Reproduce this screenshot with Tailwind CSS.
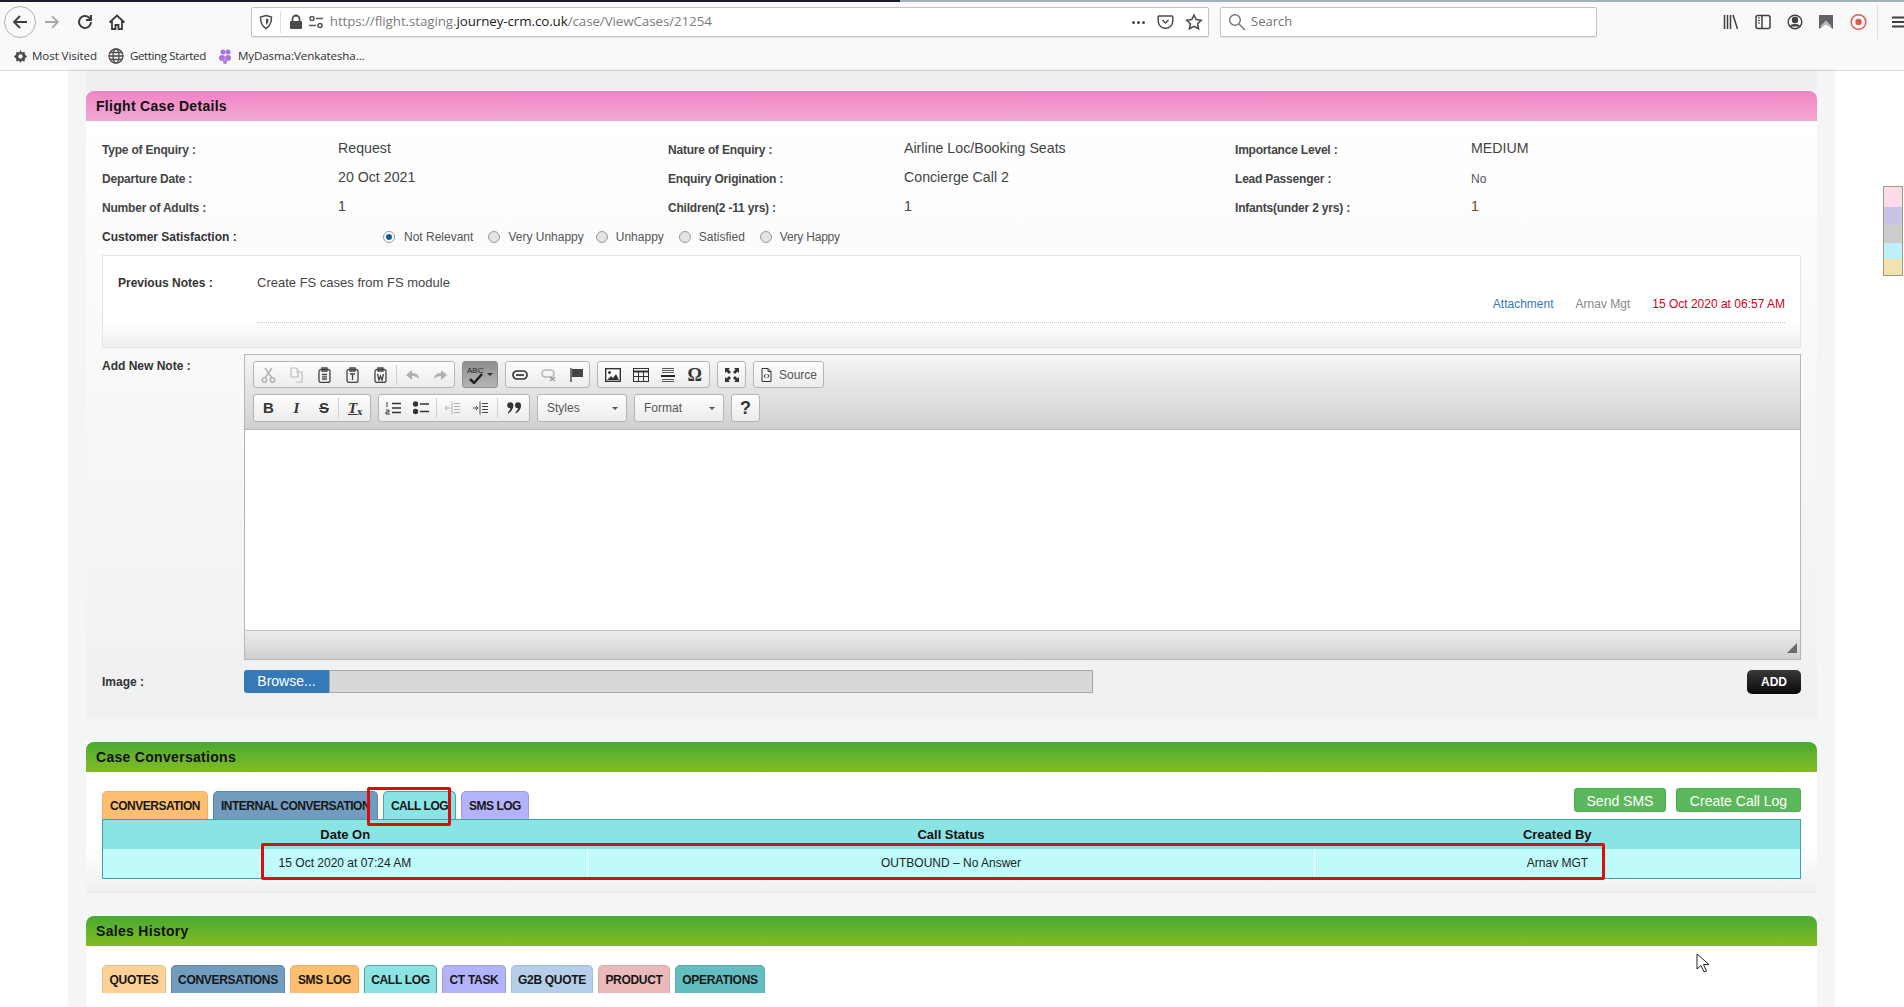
<!DOCTYPE html>
<html lang="en">
<head>
<meta charset="UTF-8">
<title>Flight Case Details</title>
<script src="https://cdn.jsdelivr.net/npm/@tailwindcss/browser@4"></script>
</head>
<body class="relative h-screen overflow-hidden bg-white font-['Liberation_Sans',Arial,sans-serif] text-[12px] text-[#333]">

<!-- browser chrome -->
<header class="h-[71px] bg-[#f9f9fa] border-b border-[#dcdcde] font-['Open_Sans',sans-serif] text-[#4a4a4f]">
  <div class="flex h-[2px]"><div class="w-[900px] bg-[#1b1b2f]"></div><div class="flex-1 bg-[#9fb4b8]"></div></div>
  <div class="flex items-center h-[40px]">
    <div class="ml-[4px] w-[32px] h-[32px] rounded-full border border-[#b1b1b3] flex items-center justify-center">
      <svg width="18" height="18" viewBox="0 0 18 18" fill="none" stroke="#3b3b3f" stroke-width="1.8"><path d="M16 9H3M9 3L3 9l6 6"/></svg>
    </div>
    <svg class="ml-[7px]" width="18" height="18" viewBox="0 0 18 18" fill="none" stroke="#a8a8ab" stroke-width="1.8"><path d="M2 9h13M9 3l6 6-6 6"/></svg>
    <svg class="ml-[15px]" width="18" height="18" viewBox="0 0 18 18" fill="none" stroke="#3b3b3f" stroke-width="2"><path d="M15 9a6 6 0 1 1-2-4.500L15 6.500M15 2v5h-5"/></svg>
    <svg class="ml-[14px]" width="18" height="18" viewBox="0 0 18 18" fill="none" stroke="#3b3b3f" stroke-width="1.800"><path d="M1.500 9.500L9 2.500l7.500 7M4 8v8h3.500v-4h3v4H14V8"/></svg>
    <div class="ml-[125px] w-[961px] h-[30px] bg-white border border-[#c4c4c6] rounded-[2px] flex items-center shadow-[0_1px_1px_rgba(0,0,0,0.1)]">
      <svg class="ml-[6px]" width="16" height="16" viewBox="0 0 16 16" fill="none" stroke="#4a4a4f" stroke-width="1.500"><path d="M8 1.500l5.500 1.500c0 5-1 9-5.500 11.500C3.500 12 2.500 8 2.500 3z"/><path d="M8 4.500l2.500.7c0 2.500-.5 4.300-2.500 5.500z" fill="#4a4a4f" stroke="none"/></svg>
      <div class="ml-[6px] w-px h-[22px] bg-[#dedee0]"></div>
      <svg class="ml-[8px]" width="14" height="16" viewBox="0 0 14 16" fill="#4a4a4f"><path d="M2 7h10a1 1 0 0 1 1 1v6a1 1 0 0 1-1 1H2a1 1 0 0 1-1-1V8a1 1 0 0 1 1-1z"/><path d="M3.500 7V5a3.500 3.500 0 0 1 7 0v2" fill="none" stroke="#4a4a4f" stroke-width="1.800"/></svg>
      <svg class="ml-[5px]" width="16" height="14" viewBox="0 0 16 14" fill="none" stroke="#55555a" stroke-width="1.500"><circle cx="4" cy="3.500" r="2"/><path d="M8 3.500h7M1 10.500h7"/><circle cx="12" cy="10.500" r="2"/></svg>
      <div class="ml-[6px] text-[13.4px] leading-none tracking-[-0.1px] text-[#7c7c80] whitespace-nowrap">https://flight.staging.<span class="text-[#1b1b20]">journey-crm.co.uk</span>/case/ViewCases/21254</div>
      <div class="ml-auto flex items-center">
        <div class="flex gap-[2px] mr-[12px]"><span class="w-[3px] h-[3px] rounded-full bg-[#4a4a4f]"></span><span class="w-[3px] h-[3px] rounded-full bg-[#4a4a4f]"></span><span class="w-[3px] h-[3px] rounded-full bg-[#4a4a4f]"></span></div>
        <svg class="mr-[11px]" width="17" height="16" viewBox="0 0 17 16" fill="none" stroke="#4a4a4f" stroke-width="1.500"><path d="M2 2h13a.8.8 0 0 1 .8.8V7a7.300 7.300 0 0 1-14.600 0V2.800A.8.8 0 0 1 2 2z"/><path d="M5.500 6l3 3 3-3"/></svg>
        <svg class="mr-[5px]" width="18" height="18" viewBox="0 0 18 18" fill="none" stroke="#4a4a4f" stroke-width="1.600"><path d="M9 2l2.200 4.500 5 .7-3.600 3.500.9 5L9 13.300l-4.500 2.400.9-5L1.800 7.200l5-.7z"/></svg>
      </div>
    </div>
    <div class="ml-[11px] w-[378px] h-[30px] bg-white border border-[#c4c4c6] rounded-[2px] flex items-center shadow-[0_1px_1px_rgba(0,0,0,0.1)]">
      <svg class="ml-[7px]" width="18" height="18" viewBox="0 0 18 18" fill="none" stroke="#77777b" stroke-width="1.500"><circle cx="7" cy="7" r="5.300"/><path d="M11 11l6 6"/></svg>
      <span class="ml-[5px] text-[13px] text-[#737373]">Search</span>
    </div>
    <div class="ml-[126px] flex items-center h-[34px]">
      <svg width="16" height="16" viewBox="0 0 16 16" fill="none" stroke="#3f3f44" stroke-width="1.500"><path d="M1.500 1v14M4.500 1v14M7.500 1v14M10 1l4.500 14"/></svg>
      <svg class="ml-[16px]" width="16" height="16" viewBox="0 0 16 16" fill="none" stroke="#3f3f44" stroke-width="1.500"><rect x="1" y="1.500" width="14" height="13" rx="2"/><path d="M7 1.500v13"/><path d="M3 4h2M3 6.500h2M3 9h2" stroke-width="1"/></svg>
      <svg class="ml-[16px]" width="16" height="16" viewBox="0 0 16 16" fill="none" stroke="#3f3f44" stroke-width="1.400"><circle cx="8" cy="8" r="6.800"/><circle cx="8" cy="6" r="2.500" fill="#3f3f44"/><path d="M3.500 12.500c1-2.500 8-2.500 9 0" fill="#3f3f44"/></svg>
      <svg class="ml-[15px]" width="16" height="16" viewBox="0 0 16 16"><path d="M1 1h14v14l-7-5-7 5z" fill="#5f6368"/><path d="M3 13l5-5 5 5" fill="none" stroke="#b9bbbd" stroke-width="2"/></svg>
      <svg class="ml-[16px]" width="17" height="18" viewBox="0 0 17 18" fill="none"><circle cx="8.500" cy="9" r="7.300" stroke="#e0584e" stroke-width="1.500"/><circle cx="8.500" cy="9" r="3.200" fill="#e0584e"/></svg>
      <div class="ml-[10px] w-px h-[34px] bg-[#e0e0e2]"></div>
      <svg class="ml-[14px]" width="12" height="14" viewBox="0 0 12 14" fill="none" stroke="#3f3f44" stroke-width="1.800"><path d="M0 2.500h14M0 7h14M0 11.500h14"/></svg>
    </div>
  </div>
  <div class="flex items-center h-[28px] text-[11.6px] text-[#2f2f33] tracking-[-0.1px]">
    <svg class="ml-[13px]" width="15" height="15" viewBox="0 0 16 16" fill="#4a4a4f"><path d="M8 1l1.400 2.600 2.900-.8.400 3L15 8l-2.300 2.200-.4 3-2.900-.8L8 15l-1.400-2.600-2.900.8-.4-3L1 8l2.300-2.200.4-3 2.900.8z"/><circle cx="8" cy="8" r="2.300" fill="#f9f9fa"/></svg>
    <span class="ml-[4px]">Most Visited</span>
    <svg class="ml-[11px]" width="16" height="16" viewBox="0 0 16 16" fill="none" stroke="#4a4a4f" stroke-width="1.300"><circle cx="8" cy="8" r="7"/><ellipse cx="8" cy="8" rx="3" ry="7"/><path d="M1 8h14M2 4.500h12M2 11.500h12"/></svg>
    <span class="ml-[6px] tracking-[-0.4px]">Getting Started</span>
    <svg class="ml-[12px]" width="16" height="16" viewBox="0 0 16 16" fill="#a877d9"><circle cx="5" cy="4" r="2.500"/><circle cx="10" cy="4" r="2.500"/><circle cx="4" cy="10" r="3"/><circle cx="10" cy="10" r="3"/><circle cx="7" cy="14" r="2"/></svg>
    <span class="ml-[4px]">MyDasma:Venkatesha...</span>
  </div>
</header>

<!-- page -->
<div class="ml-[70px] w-[1763px] h-[936px] px-[16px] bg-[#f4f5f5] shadow-[0_0_4px_rgba(0,0,0,0.12)] overflow-hidden">

  <section class="h-[648px] bg-gradient-to-b from-[#eeeff0] from-0% via-white via-[6%] to-[#eff0f1]">
    <div class="h-[20px] bg-[#eeeff0]"></div>
    <h2 class="h-[30px] px-[10px] flex items-center rounded-t-[8px] bg-gradient-to-b from-[#f282c4] to-[#efa9d3] text-[14px] tracking-[0.3px] font-bold text-[#111]">Flight Case Details</h2>
    <div class="pt-[14px] pl-[16px] pr-[16px]">
      <div class="grid grid-cols-[236px_330px_236px_331px_236px_1fr] auto-rows-[29px] items-center text-[14.2px] text-[#444] [&>b]:tracking-[-0.2px]">
        <b class="text-[12px]">Type of Enquiry :</b><span class="mb-[1px]">Request</span>
        <b class="text-[12px]">Nature of Enquiry :</b><span class="mb-[1px]">Airline Loc/Booking Seats</span>
        <b class="text-[12px]">Importance Level :</b><span class="mb-[1px]">MEDIUM</span>
        <b class="text-[12px]">Departure Date :</b><span class="mb-[1px]">20 Oct 2021</span>
        <b class="text-[12px]">Enquiry Origination :</b><span class="mb-[1px]">Concierge Call 2</span>
        <b class="text-[12px]">Lead Passenger :</b><span class="text-[12px] text-[#555]">No</span>
        <b class="text-[12px]">Number of Adults :</b><span class="mb-[1px]">1</span>
        <b class="text-[12px]">Children(2 -11 yrs) :</b><span class="mb-[1px]">1</span>
        <b class="text-[12px]">Infants(under 2 yrs) :</b><span class="mb-[1px] text-[#6b4a1e]">1</span>
      </div>
      <div class="flex items-center h-[29px] text-[12px] text-[#555]">
        <b class="w-[281px] text-[#333]">Customer Satisfaction :</b>
        <span class="w-[12px] h-[12px] rounded-full border border-[#9a9a9a] bg-white flex items-center justify-center"><span class="w-[6px] h-[6px] rounded-full bg-[#0f5f9e]"></span></span>
        <span class="ml-[9px] mr-[15px]">Not Relevant</span>
        <span class="w-[12px] h-[12px] rounded-full border border-[#9a9a9a] bg-[#e4e4e4]"></span>
        <span class="ml-[8px] mr-[12px]">Very Unhappy</span>
        <span class="w-[12px] h-[12px] rounded-full border border-[#9a9a9a] bg-[#e4e4e4]"></span>
        <span class="ml-[8px] mr-[15px]">Unhappy</span>
        <span class="w-[12px] h-[12px] rounded-full border border-[#9a9a9a] bg-[#e4e4e4]"></span>
        <span class="ml-[8px] mr-[15px]">Satisfied</span>
        <span class="w-[12px] h-[12px] rounded-full border border-[#9a9a9a] bg-[#e4e4e4]"></span>
        <span class="ml-[8px] tracking-[-0.2px]">Very Happy</span>
      </div>

      <div class="mt-[4px] h-[93px] border border-[#e4e5e5] bg-gradient-to-b from-white from-70% to-[#eef0f1] flex pl-[15px] pr-[15px] pt-[20px]">
        <b class="w-[139px] h-[14px] leading-[14px]">Previous Notes :</b>
        <div class="flex-1">
          <div class="h-[14px] leading-[14px] text-[13px] text-[#444]">Create FS cases from FS module</div>
          <div class="mt-[5px] h-[18px] flex justify-end gap-[22px]">
            <span class="text-[#337ab7]">Attachment</span>
            <span class="text-[#888]">Arnav Mgt</span>
            <span class="text-[#d0021b]">15 Oct 2020 at 06:57 AM</span>
          </div>
          <div class="mt-[9px] border-b border-dotted border-[#c4c4c4]"></div>
        </div>
      </div>

      <div class="mt-[6px] flex">
        <b class="w-[142px] pt-[3px]">Add New Note :</b>
        <div class="flex-1 h-[306px] border border-[#b6b6b6] flex flex-col">
          <div class="h-[75px] px-[8px] pt-[6px] border-b border-[#b6b6b6] bg-gradient-to-b from-[#f5f5f5] to-[#cfd1cf] text-[#444]">
            <div class="flex h-[27px] gap-[7px]">
              <div class="w-[202px] border border-[#b5b5b5] rounded-[3px] bg-gradient-to-b from-[#fdfdfd] to-[#ececec] flex items-center pl-[7px] gap-[13px]">
                <svg width="15" height="16" viewBox="0 0 15 16" fill="none" stroke="#b4b4b4" stroke-width="1.600"><path d="M4 1l7 10M11 1L4 11"/><circle cx="3.500" cy="13" r="2.200"/><circle cx="11.500" cy="13" r="2.200"/></svg>
                <svg width="15" height="16" viewBox="0 0 15 16" fill="none" stroke="#bdbdbd" stroke-width="1.200"><path d="M2 1h5l2 2v7H2zM7 5h6v10H7"/></svg>
                <svg width="15" height="16" viewBox="0 0 15 16" fill="none" stroke="#444" stroke-width="1.300"><rect x="2" y="2.500" width="11" height="13" rx="2"/><path d="M5 1h5v3H5zM5 7.500h5M5 9.800h5M5 12h5"/></svg>
                <svg width="15" height="16" viewBox="0 0 15 16" fill="none" stroke="#444" stroke-width="1.300"><rect x="2" y="2.500" width="11" height="13" rx="2"/><path d="M5 1h5v3H5zM5 7h5M7.500 7v6"/></svg>
                <svg width="15" height="16" viewBox="0 0 15 16" fill="none" stroke="#444" stroke-width="1.300"><rect x="2" y="2.500" width="11" height="13" rx="2"/><path d="M5 1h5v3H5zM4.500 7l1.500 6 1.500-4 1.500 4 1.500-6"/></svg>
                <div class="w-px h-[20px] bg-[#cfcfcf] -mx-[5px]"></div>
                <svg width="15" height="14" viewBox="0 0 15 14" fill="#b0b0b0"><path d="M1 7l6-5v3c4 0 7 2 7 6-2-2-4-3-7-3v4z"/></svg>
                <svg width="15" height="14" viewBox="0 0 15 14" fill="#b0b0b0"><path d="M14 7L8 2v3c-4 0-7 2-7 6 2-2 4-3 7-3v4z"/></svg>
              </div>
              <div class="w-[36px] border border-[#8f8f8f] rounded-[3px] bg-gradient-to-b from-[#8e8e8e] to-[#b5b5b5] flex items-center justify-center gap-[2px]">
                <div class="relative w-[18px] h-[18px] text-[8px] leading-[9px] text-[#222]">ABC<svg class="absolute left-[2px] top-[7px]" width="14" height="11" viewBox="0 0 14 11" fill="none" stroke="#222" stroke-width="2.500"><path d="M1 6l4 4 8-9"/></svg></div>
                <span class="w-0 h-0 border-x-[3px] border-x-transparent border-t-[3px] border-t-[#333]"></span>
              </div>
              <div class="w-[85px] border border-[#b5b5b5] rounded-[3px] bg-gradient-to-b from-[#fdfdfd] to-[#ececec] flex items-center justify-between pl-[6px] pr-[4px]">
                <svg width="16" height="12" viewBox="0 0 16 12" fill="none" stroke="#333" stroke-width="1.700"><rect x="1" y="2" width="14" height="8" rx="4"/><path d="M4 6h8"/></svg>
                <svg width="16" height="14" viewBox="0 0 16 14" fill="none" stroke="#b5b5b5" stroke-width="1.500"><rect x="1" y="2" width="12" height="7" rx="3.500"/><path d="M9 9l5 4M14 9l-5 4" stroke="#999"/></svg>
                <svg width="16" height="16" viewBox="0 0 16 16"><path d="M2 1v14" stroke="#333" stroke-width="1.300"/><path d="M3 2h11v8H3z" fill="#444"/></svg>
              </div>
              <div class="w-[113px] border border-[#b5b5b5] rounded-[3px] bg-gradient-to-b from-[#fdfdfd] to-[#ececec] flex items-center justify-between px-[7px]">
                <svg width="16" height="14" viewBox="0 0 16 14"><rect x=".7" y=".7" width="14.600" height="12.600" fill="#fff" stroke="#333" stroke-width="1.400"/><circle cx="4.500" cy="4.500" r="1.500" fill="#333"/><path d="M2 12l4-4 2 2 3-4 3 6z" fill="#333"/></svg>
                <svg width="16" height="14" viewBox="0 0 16 14" fill="none" stroke="#333"><rect x=".5" y=".5" width="15" height="13"/><path d="M.5 3.500h15" stroke-width="2"/><path d="M.5 8.500h15M5.500 3v10M10.500 3v10"/></svg>
                <svg width="16" height="16" viewBox="0 0 16 16" fill="none" stroke="#555"><path d="M2 1.500h12M2 3.500h12M2 5.500h12M2 12.500h12M2 14.500h12"/><path d="M1 9h14" stroke="#222" stroke-width="2"/></svg>
                <span class="font-['Liberation_Serif',serif] text-[18px] leading-none font-bold text-[#333]">Ω</span>
              </div>
              <div class="w-[29px] border border-[#b5b5b5] rounded-[3px] bg-gradient-to-b from-[#fdfdfd] to-[#ececec] flex items-center justify-center">
                <svg width="14" height="14" viewBox="0 0 14 14" fill="#333"><path d="M0 0h5L3.500 1.500 6 4 4 6 1.500 3.500 0 5zM14 0v5l-1.500-1.500L10 6 8 4l2.500-2.500L9 0zM0 14V9l1.500 1.500L4 8l2 2-2.500 2.500L5 14zM14 14H9l1.500-1.500L8 10l2-2 2.500 2.500L14 9z"/></svg>
              </div>
              <div class="w-[71px] border border-[#b5b5b5] rounded-[3px] bg-gradient-to-b from-[#fdfdfd] to-[#ececec] flex items-center pl-[7px] gap-[7px]">
                <svg width="11" height="14" viewBox="0 0 11 14" fill="none" stroke="#333"><path d="M1 .5h6l3 3v10H1zM7 .5v3h3"/><path d="M4.500 6L3 8l1.500 2M6.500 6L8 8l-1.500 2"/></svg>
                <span class="text-[12px] text-[#555]">Source</span>
              </div>
            </div>
            <div class="mt-[6px] flex h-[28px] gap-[7px]">
              <div class="w-[118px] border border-[#b5b5b5] rounded-[3px] bg-gradient-to-b from-[#fdfdfd] to-[#ececec] flex items-center text-[15px] text-[#333]">
                <b class="w-[29px] text-center font-['Liberation_Sans',sans-serif]">B</b>
                <i class="w-[27px] text-center font-bold font-['Liberation_Serif',serif]">I</i>
                <span class="w-[28px] text-center line-through font-bold">S</span>
                <div class="w-px h-[20px] bg-[#cfcfcf]"></div>
                <i class="ml-[9px] font-bold underline font-['Liberation_Serif',serif]">T<sub class="text-[10px] not-italic">x</sub></i>
              </div>
              <div class="w-[152px] border border-[#b5b5b5] rounded-[3px] bg-gradient-to-b from-[#fdfdfd] to-[#ececec] flex items-center pl-[6px] gap-[12px]">
                <svg width="16" height="14" viewBox="0 0 16 14" fill="none" stroke="#333" stroke-width="1.400"><path d="M7 2.500h9M7 7h9M7 11.500h9"/><path d="M2 1v5M1 13h4M1 9h3v2H1v2" stroke-width="1"/></svg>
                <svg width="16" height="14" viewBox="0 0 16 14" fill="none" stroke="#333" stroke-width="1.400"><circle cx="2.500" cy="3" r="2" fill="#333"/><circle cx="2.500" cy="10.500" r="2" fill="#333"/><path d="M7 3h9M7 10.500h9"/></svg>
                <div class="w-px h-[20px] bg-[#cfcfcf] -mx-[5px]"></div>
                <svg width="16" height="14" viewBox="0 0 16 14" fill="none" stroke="#b0b0b0"><path d="M8 .5v13M10 2.500h6M10 5.500h6M10 8.500h6M10 11.500h6M6 7H1M3 5L1 7l2 2"/></svg>
                <svg width="16" height="14" viewBox="0 0 16 14" fill="none" stroke="#444"><path d="M8 .5v13M10 2.500h6M10 5.500h6M10 8.500h6M10 11.500h6M1 7h5M4 5l2 2-2 2"/></svg>
                <div class="w-px h-[20px] bg-[#cfcfcf] -mx-[3px]"></div>
                <svg width="15" height="12" viewBox="0 0 15 12" fill="#333"><circle cx="3.300" cy="3.300" r="3"/><path d="M6.300 3.300C6.300 7 4 10 1.300 11.500l-.6-1C2.500 9 3.500 7 3.500 5z"/><circle cx="11" cy="3.300" r="3"/><path d="M14 3.300C14 7 11.700 10 9 11.500l-.6-1c1.800-1.500 2.800-3.500 2.800-5.500z"/></svg>
              </div>
              <div class="w-[90px] border border-[#b5b5b5] rounded-[3px] bg-gradient-to-b from-[#fdfdfd] to-[#ececec] flex items-center justify-between pl-[9px] pr-[8px] text-[12px] text-[#555]">Styles<span class="w-0 h-0 border-x-[3px] border-x-transparent border-t-[3px] border-t-[#555]"></span></div>
              <div class="w-[90px] border border-[#b5b5b5] rounded-[3px] bg-gradient-to-b from-[#fdfdfd] to-[#ececec] flex items-center justify-between pl-[9px] pr-[8px] text-[12px] text-[#555]">Format<span class="w-0 h-0 border-x-[3px] border-x-transparent border-t-[3px] border-t-[#555]"></span></div>
              <div class="w-[29px] border border-[#b5b5b5] rounded-[3px] bg-gradient-to-b from-[#fdfdfd] to-[#ececec] flex items-center justify-center text-[18px] font-bold text-[#333]">?</div>
            </div>
          </div>
          <div class="h-[201px] bg-white border-b border-[#c4c4c4]"></div>
          <div class="flex-1 bg-gradient-to-b from-[#ececec] to-[#cfd1cf] relative">
            <span class="absolute right-[3px] bottom-[6px] w-0 h-0 border-l-[10px] border-l-transparent border-b-[10px] border-b-[#6b6b6b]"></span>
          </div>
        </div>
      </div>

      <div class="mt-[10px] flex items-start">
        <b class="w-[142px] leading-[25px]">Image :</b>
        <div class="w-[85px] h-[23px] bg-[#337ab7] text-white text-[14px] leading-[23px] text-center rounded-l-[3px]">Browse...</div>
        <div class="w-[764px] h-[23px] bg-[#d8d8d8] border border-[#a8a8a8]"></div>
        <div class="ml-auto w-[54px] h-[24px] rounded-[5px] bg-gradient-to-b from-[#3a3a3a] to-[#0a0a0a] text-white font-bold leading-[24px] text-center">ADD</div>
      </div>
    </div>
  </section>

  <section class="mt-[23px] h-[151px] bg-gradient-to-b from-white from-70% to-[#eff0f1] border-b border-[#e8e9e9]">
    <h2 class="h-[30px] px-[10px] flex items-center rounded-t-[8px] bg-gradient-to-b from-[#46aa31] to-[#82bc22] text-[14px] tracking-[0.3px] font-bold text-[#111]">Case Conversations</h2>
    <div class="px-[16px] pt-[17px]">
      <div class="flex items-end h-[30px]">
        <div class="flex items-end h-[28px] gap-[5px] text-[12px] tracking-[-0.5px] font-bold text-[#161616]">
          <div class="w-[106px] h-[28px] leading-[28px] text-center rounded-t-[5px] border border-b-0 border-[#e9b26c] bg-[#fdbe6f]">CONVERSATION</div>
          <div class="w-[165px] h-[28px] pl-[7px] leading-[28px] whitespace-nowrap rounded-t-[5px] border border-b-0 border-[#5d87a8] bg-[#729cbf]">INTERNAL CONVERSATION</div>
          <div class="w-[73px] h-[28px] leading-[28px] text-center rounded-t-[5px] border border-b-0 border-[#4aa5a5] bg-[#8ae4e4]">CALL LOG</div>
          <div class="w-[68px] h-[28px] leading-[28px] text-center rounded-t-[5px] border border-b-0 border-[#9c9ce0] bg-[#b3b3fb]">SMS LOG</div>
        </div>
        <div class="ml-auto mb-[7px] flex gap-[10px] text-[14px] text-white">
          <div class="w-[92px] h-[24px] leading-[24px] text-center rounded-[3px] bg-[#5cb85c] border border-[#4cae4c]">Send SMS</div>
          <div class="w-[125px] h-[24px] leading-[24px] text-center rounded-[3px] bg-[#5cb85c] border border-[#4cae4c]">Create Call Log</div>
        </div>
      </div>
      <table class="w-full h-[60px] table-fixed border border-[#3fa3a3] text-[#222]">
        <colgroup><col class="w-[485px]"><col class="w-[727px]"><col></colgroup>
        <thead><tr class="h-[29px] bg-[#8ae4e4] text-[13px] text-[#111]"><th>Date On</th><th>Call Status</th><th>Created By</th></tr></thead>
        <tbody><tr class="bg-[#bffbfb] text-[12px]"><td class="text-center">15 Oct 2020 at 07:24 AM</td><td class="text-center border-l border-white">OUTBOUND – No Answer</td><td class="text-center border-l border-white">Arnav MGT</td></tr></tbody>
      </table>
    </div>
  </section>

  <section class="mt-[23px] h-[200px] bg-white">
    <h2 class="h-[30px] px-[10px] flex items-center rounded-t-[8px] bg-gradient-to-b from-[#46aa31] to-[#82bc22] text-[14px] tracking-[0.3px] font-bold text-[#111]">Sales History</h2>
    <div class="px-[16px] pt-[19px] flex gap-[5px] text-[12px] tracking-[-0.3px] font-bold text-[#161616]">
      <div class="w-[64px] h-[28px] leading-[28px] text-center rounded-t-[5px] border border-b-0 border-[#e8bf84] bg-[#fdd196]">QUOTES</div>
      <div class="w-[114px] h-[28px] leading-[28px] text-center rounded-t-[5px] border border-b-0 border-[#5d87a8] bg-[#729cbf]">CONVERSATIONS</div>
      <div class="w-[69px] h-[28px] leading-[28px] text-center rounded-t-[5px] border border-b-0 border-[#e9b26c] bg-[#fdbe6f]">SMS LOG</div>
      <div class="w-[73px] h-[28px] leading-[28px] text-center rounded-t-[5px] border border-b-0 border-[#4aa5a5] bg-[#8ae4e4]">CALL LOG</div>
      <div class="w-[64px] h-[28px] leading-[28px] text-center rounded-t-[5px] border border-b-0 border-[#9c9ce0] bg-[#b3b3fb]">CT TASK</div>
      <div class="w-[82px] h-[28px] leading-[28px] text-center rounded-t-[5px] border border-b-0 border-[#a3bfe0] bg-[#b5cee9]">G2B QUOTE</div>
      <div class="w-[72px] h-[28px] leading-[28px] text-center rounded-t-[5px] border border-b-0 border-[#dcaaaa] bg-[#ebb9b9]">PRODUCT</div>
      <div class="w-[90px] h-[28px] leading-[28px] text-center rounded-t-[5px] border border-b-0 border-[#58abab] bg-[#63bfbf]">OPERATIONS</div>
    </div>
  </section>
</div>

<!-- colour palette pinned to the right edge -->
<div class="absolute left-[1883px] top-[186px] w-[20px] h-[90px] border border-[#a09a80] flex flex-col">
  <div class="h-[20px] bg-[#fbdce8]"></div>
  <div class="h-[18px] bg-[#c9c3e8]"></div>
  <div class="h-[18px] bg-[#cccccc]"></div>
  <div class="h-[16px] bg-[#bff0f8]"></div>
  <div class="flex-1 bg-[#f1e2b0]"></div>
</div>

<!-- red annotation boxes -->
<div class="absolute left-[367px] top-[787px] w-[84px] h-[39px] border-[3px] border-[#d90f0f] rounded-[2px]"></div>
<div class="absolute left-[261px] top-[843px] w-[1344px] h-[37px] border-[3px] border-[#d90f0f] rounded-[2px]"></div>

<!-- mouse cursor -->
<svg class="absolute left-[1696px] top-[953px]" width="14" height="21" viewBox="0 0 14 21" fill="#fff" stroke="#222"><path d="M1 1v15l4-3.500 3 6.500 2.500-1-3-6.500H13z"/></svg>
</body>
</html>
